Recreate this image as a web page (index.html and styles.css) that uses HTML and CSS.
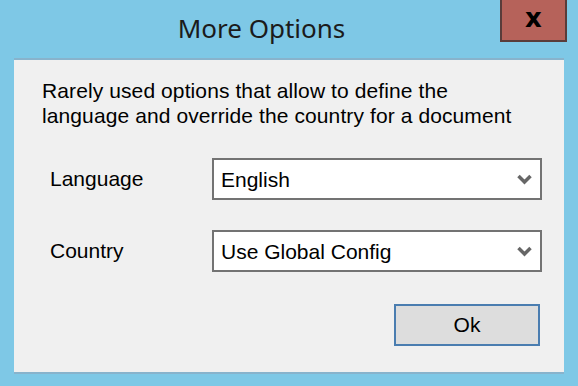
FILE: index.html
```html
<!DOCTYPE html>
<html lang="en">
<head>
    <meta charset="UTF-8" />
    <title>More Options</title>
    <link rel="stylesheet" href="styles.css">
</head>
<body>
    <div class="window">
        <div class="titlebar">
            <span class="title">More Options</span>
            <button class="close-btn">x</button>
        </div>

        <div class="panel">
            <p class="intro">Rarely used options that allow to define the<br>language and override the country for a document</p>

            <div class="field-row">
                <label class="field-label">Language</label>
                <div class="combo">
                    <span>English</span>
                    <svg class="chevron" width="15" height="11" viewBox="0 0 15 11">
                        <path d="M1.5 2 L7.5 8 L13.5 2" />
                    </svg>
                </div>
            </div>

            <div class="field-row">
                <label class="field-label">Country</label>
                <div class="combo">
                    <span>Use Global Config</span>
                    <svg class="chevron" width="15" height="11" viewBox="0 0 15 11">
                        <path d="M1.5 2 L7.5 8 L13.5 2" />
                    </svg>
                </div>
            </div>

            <div class="actions">
                <button class="ok-btn">Ok</button>
            </div>
        </div>
    </div>
</body>
</html>
```

FILE: styles.css
```css
/* Window frame */
body {
    margin: 0;
    background-color: #7ec8e6; /* light blue window chrome */
    font-family: 'Liberation Sans', Arial, sans-serif;
    color: #000;
}

.window {
    width: 578px;
    height: 386px;
}

/* Title bar */
.titlebar {
    display: flex;
    height: 58px;
}

.title {
    flex: 1;
    padding-left: 23px;
    padding-top: 10px;
    text-align: center;
    font-family: 'Noto Sans', 'Open Sans', sans-serif;
    font-size: 26px;
    color: #1b1b1b;
}

.close-btn {
    width: 67px;
    height: 42px;
    margin-right: 11px;
    padding: 0 0 4px 0;
    background-color: #b6625a;
    border: 2px solid #5a3c3a;
    border-top: none;
    font-family: 'DejaVu Sans', sans-serif;
    font-weight: bold;
    font-size: 26px;
    color: #000;
}

/* Content panel */
.panel {
    box-sizing: border-box;
    height: 316px;
    margin: 0 14px;
    padding-top: 18px;
    background-color: #f0f0f0;
    border-top: 2px solid #88b3cc;
    border-bottom: 2px solid #88b3cc;
}

.intro {
    margin: 0 0 30px 28px;
    font-size: 21px;
    line-height: 25px;
    letter-spacing: 0.1px;
}

/* Label + combo rows */
.field-row {
    display: flex;
    align-items: center;
    margin-bottom: 30px;
}

.field-label {
    width: 162px;
    margin-left: 36px;
    font-size: 21px;
}

.combo {
    display: flex;
    align-items: center;
    justify-content: space-between;
    width: 330px;
    height: 42px;
    box-sizing: border-box;
    padding: 1px 8px 0 7px;
    background-color: #fff;
    border: 2px solid #737373;
    font-size: 21px;
}

.chevron path {
    fill: none;
    stroke: #666;
    stroke-width: 3.5;
}

/* Bottom button */
.actions {
    display: flex;
    justify-content: flex-end;
    margin-right: 24px;
    margin-top: 32px;
}

.ok-btn {
    width: 146px;
    height: 42px;
    background-color: #dddddd;
    border: 2px solid #4a7db0;
    font-family: 'Liberation Sans', Arial, sans-serif;
    font-size: 21px;
    color: #000;
}
```
